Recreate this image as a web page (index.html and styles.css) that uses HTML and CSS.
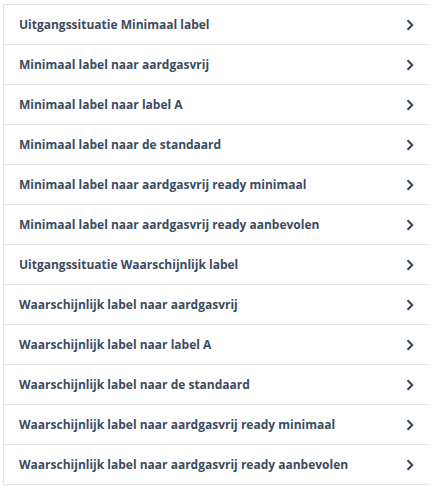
FILE: index.html
```html
<!DOCTYPE html>
<html>
<head>
<meta charset="utf-8">
<link rel="stylesheet" href="styles.css">
</head>
<body>
<ul class="list">
  <li class="item"><span class="label">Uitgangssituatie Minimaal label</span><svg class="chev" viewBox="0 0 8 12"><path d="M1.5 1.2 L6.2 6 L1.5 10.8" /></svg></li>
  <li class="item"><span class="label">Minimaal label naar aardgasvrij</span><svg class="chev" viewBox="0 0 8 12"><path d="M1.5 1.2 L6.2 6 L1.5 10.8" /></svg></li>
  <li class="item"><span class="label">Minimaal label naar label A</span><svg class="chev" viewBox="0 0 8 12"><path d="M1.5 1.2 L6.2 6 L1.5 10.8" /></svg></li>
  <li class="item"><span class="label">Minimaal label naar de standaard</span><svg class="chev" viewBox="0 0 8 12"><path d="M1.5 1.2 L6.2 6 L1.5 10.8" /></svg></li>
  <li class="item"><span class="label">Minimaal label naar aardgasvrij ready minimaal</span><svg class="chev" viewBox="0 0 8 12"><path d="M1.5 1.2 L6.2 6 L1.5 10.8" /></svg></li>
  <li class="item"><span class="label">Minimaal label naar aardgasvrij ready aanbevolen</span><svg class="chev" viewBox="0 0 8 12"><path d="M1.5 1.2 L6.2 6 L1.5 10.8" /></svg></li>
  <li class="item"><span class="label">Uitgangssituatie Waarschijnlijk label</span><svg class="chev" viewBox="0 0 8 12"><path d="M1.5 1.2 L6.2 6 L1.5 10.8" /></svg></li>
  <li class="item"><span class="label">Waarschijnlijk label naar aardgasvrij</span><svg class="chev" viewBox="0 0 8 12"><path d="M1.5 1.2 L6.2 6 L1.5 10.8" /></svg></li>
  <li class="item"><span class="label">Waarschijnlijk label naar label A</span><svg class="chev" viewBox="0 0 8 12"><path d="M1.5 1.2 L6.2 6 L1.5 10.8" /></svg></li>
  <li class="item"><span class="label">Waarschijnlijk label naar de standaard</span><svg class="chev" viewBox="0 0 8 12"><path d="M1.5 1.2 L6.2 6 L1.5 10.8" /></svg></li>
  <li class="item"><span class="label">Waarschijnlijk label naar aardgasvrij ready minimaal</span><svg class="chev" viewBox="0 0 8 12"><path d="M1.5 1.2 L6.2 6 L1.5 10.8" /></svg></li>
  <li class="item"><span class="label">Waarschijnlijk label naar aardgasvrij ready aanbevolen</span><svg class="chev" viewBox="0 0 8 12"><path d="M1.5 1.2 L6.2 6 L1.5 10.8" /></svg></li>
</ul>
</body>
</html>
```
FILE: styles.css
```css
html, body {
  margin: 0;
  padding: 0;
  background: #ffffff;
}
body {
  padding: 4px 4px 0 3px;
}
.list {
  list-style: none;
  margin: 0;
  padding: 0;
  border-left: 1px solid #e2e2e2;
  width: 425px;
}
.item {
  display: flex;
  align-items: center;
  justify-content: space-between;
  height: 39px;
  border-top: 1px solid #e2e2e2;
  padding: 0 15px 0 15px;
  font-family: "Open Sans", sans-serif;
  font-weight: 700;
  font-size: 12px;
  color: #3a4b60;
}
.item:last-child {
  border-bottom: 1px solid #e2e2e2;
}
.chev {
  width: 8px;
  height: 12px;
  fill: none;
  stroke: #33445a;
  stroke-width: 2;
}
```
